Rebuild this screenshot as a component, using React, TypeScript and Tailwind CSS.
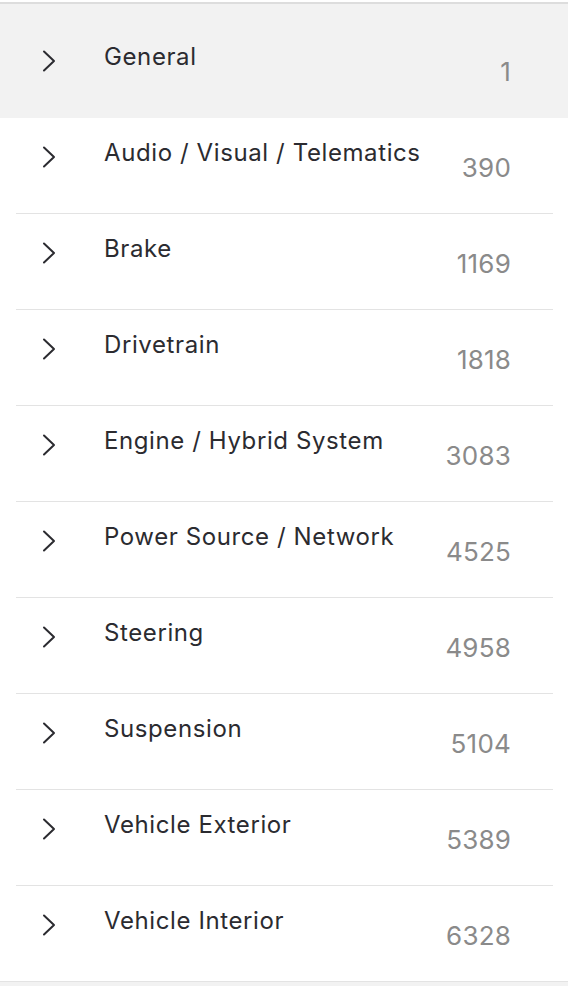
import React from "react";

type Category = {
  name: string;
  count: number;
};

const categories: Category[] = [
  { name: "Audio / Visual / Telematics", count: 390 },
  { name: "Brake", count: 1169 },
  { name: "Drivetrain", count: 1818 },
  { name: "Engine / Hybrid System", count: 3083 },
  { name: "Power Source / Network", count: 4525 },
  { name: "Steering", count: 4958 },
  { name: "Suspension", count: 5104 },
  { name: "Vehicle Exterior", count: 5389 },
  { name: "Vehicle Interior", count: 6328 },
];

const Chevron = () => (
  <svg width="14" height="24" viewBox="0 0 14 24" fill="none" className="shrink-0">
    <path d="M2 2.5 L12 12 L2 21.5" stroke="#2b2b30" strokeWidth="2" strokeLinecap="round" strokeLinejoin="round" />
  </svg>
);

const RowContent: React.FC<Category> = ({ name, count }) => (
  <div className="flex h-[95px] items-center">
    <div className="ml-[42px] mb-[17px] w-[14px]">
      <Chevron />
    </div>
    <p className="ml-[48px] mb-[26px] text-[24px] leading-[30px] tracking-[0.6px] text-[#2b2b30]">{name}</p>
    <p className="ml-auto mr-[57px] mt-[4px] text-[26px] leading-[30px] tracking-[0.2px] text-[#8a8a8a]">{count}</p>
  </div>
);

const App: React.FC = () => {
  return (
    <div
      className="w-[568px] h-[986px] overflow-hidden bg-white flex flex-col"
      style={{ fontFamily: "Inter, 'Noto Sans', sans-serif" }}
    >
      <div className="h-[2px] bg-white" />
      <div className="h-[2px] bg-[#dddddd]" />
      <div className="h-[114px] bg-[#f2f2f2] pt-[18px]">
        <RowContent name="General" count={1} />
      </div>
      <div className="flex flex-col">
        {categories.map((c, i) => (
          <div key={c.name} className="flex flex-col">
            {i > 0 && <div className="ml-4 mr-[15px] h-px bg-[#e3e3e3]" />}
            <RowContent name={c.name} count={c.count} />
          </div>
        ))}
      </div>
      <div className="h-px bg-[#e3e3e3]" />
      <div className="flex-1 bg-[#f2f2f2]" />
    </div>
  );
};

export default App;
